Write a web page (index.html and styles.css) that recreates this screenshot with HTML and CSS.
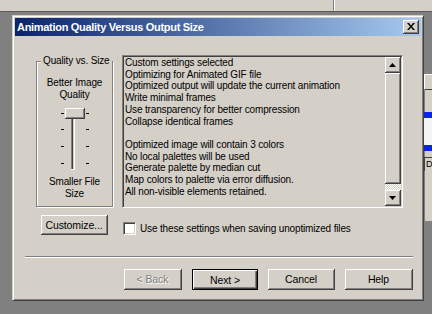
FILE: index.html
```html
<!DOCTYPE html>
<html>
  <head>
    <title>Animation Quality Versus Output Size</title>
    <link rel="stylesheet" href="styles.css">
  </head>
  <body>
    <div class="screen">
      <div class="topbar"><div class="topbar-split"></div></div>
      <div class="desk">
        <div class="dialog">
          <div class="titlebar">
            <span class="title">Animation Quality Versus Output Size</span>
            <span class="close">
              <svg width="8" height="7" viewBox="0 0 8 7"><path d="M0 0h2l2 2.5L6 0h2L5 3.5 8 7H6L4 4.5 2 7H0l3-3.5z" fill="#000"/></svg>
            </span>
          </div>

          <div class="row-top">
            <fieldset class="quality">
              <legend>Quality vs. Size</legend>
              <div class="caption">Better Image<br>Quality</div>
              <svg class="slider" width="32" height="68" viewBox="0 0 32 68">
                <!-- ticks -->
                <rect x="2" y="8" width="3" height="1" fill="#000"/>
                <rect x="2" y="24" width="3" height="1" fill="#000"/>
                <rect x="2" y="41" width="3" height="1" fill="#000"/>
                <rect x="2" y="58" width="3" height="1" fill="#000"/>
                <rect x="27" y="8" width="3" height="1" fill="#000"/>
                <rect x="27" y="24" width="3" height="1" fill="#000"/>
                <rect x="27" y="41" width="3" height="1" fill="#000"/>
                <rect x="27" y="58" width="3" height="1" fill="#000"/>
                <!-- track -->
                <rect x="12" y="6" width="4" height="59" fill="#fff"/>
                <rect x="12" y="6" width="3" height="58" fill="#808080"/>
                <rect x="13" y="7" width="2" height="57" fill="#404040"/>
                <rect x="14" y="7" width="1" height="57" fill="#d4d0c8"/>
                <!-- thumb -->
                <rect x="6" y="3" width="20" height="11" fill="#404040"/>
                <rect x="6" y="3" width="19" height="10" fill="#fff"/>
                <rect x="7" y="4" width="18" height="9" fill="#808080"/>
                <rect x="7" y="4" width="17" height="8" fill="#d4d0c8"/>
              </svg>
              <div class="caption">Smaller File<br>Size</div>
            </fieldset>

            <div class="listbox">
              <div class="list-text">
                Custom settings selected<br>
                Optimizing for Animated GIF file<br>
                Optimized output will update the current animation<br>
                Write minimal frames<br>
                Use transparency for better compression<br>
                Collapse identical frames<br>
                <br>
                Optimized image will contain 3 colors<br>
                No local palettes will be used<br>
                Generate palette by median cut<br>
                Map colors to palette via error diffusion.<br>
                All non-visible elements retained.
              </div>
              <div class="scrollbar">
                <div class="sb-btn">
                  <svg width="7" height="4" viewBox="0 0 7 4"><path d="M3.5 0L7 4H0z" fill="#000"/></svg>
                </div>
                <div class="sb-thumb"></div>
                <div class="sb-track"></div>
                <div class="sb-btn">
                  <svg width="7" height="4" viewBox="0 0 7 4"><path d="M0 0h7L3.5 4z" fill="#000"/></svg>
                </div>
              </div>
            </div>
          </div>

          <div class="row-mid">
            <button class="btn customize">Customize...</button>
            <span class="checkbox"></span>
            <span class="check-label">Use these settings when saving unoptimized files</span>
          </div>

          <div class="separator"></div>

          <div class="row-buttons">
            <button class="btn btn-back" disabled>&lt; Back</button>
            <button class="btn btn-next">Next &gt;</button>
            <button class="btn btn-cancel">Cancel</button>
            <button class="btn btn-help">Help</button>
          </div>
        </div>

        <div class="side">
          <div class="side-dark"></div>
          <div class="side-box"></div>
          <div class="side-face"></div>
          <div class="side-blue"></div>
          <div class="side-white"></div>
          <div class="side-blue"></div>
          <div class="side-face short"></div>
          <div class="side-d"><span class="side-letter">D</span></div>
          <div class="side-face tall"></div>
          <div class="side-rest"></div>
        </div>
      </div>
    </div>
  </body>
</html>
```

FILE: styles.css
```css
* {
  box-sizing: border-box;
}
body {
  margin: 0;
  background-color: #808080;
  font-family: "Liberation Sans", Arial, sans-serif;
  font-size: 10px;
  letter-spacing: -0.15px;
  color: #000;
}
.screen {
  width: 432px;
  height: 314px;
  overflow: hidden;
}

/* strip of the window behind */
.topbar {
  height: 12px;
  background-color: #d4d0c8;
  border-bottom: 1px solid #5a5a5a;
}
.topbar-split {
  margin-left: 333px;
  width: 2px;
  height: 11px;
  border-left: 1px solid #808080;
  border-right: 1px solid #fff;
}
.desk {
  display: flex;
  padding-top: 3px;
  padding-left: 12px;
}

/* dialog window */
.dialog {
  width: 412px;
  height: 286px;
  padding: 2px;
  background-color: #d4d0c8;
  border: 1px solid;
  border-color: #d4d0c8 #404040 #404040 #d4d0c8;
  box-shadow: inset 1px 1px 0 #fff, inset -1px -1px 0 #808080;
}
.titlebar {
  height: 18px;
  display: flex;
  align-items: center;
  justify-content: space-between;
  padding: 0 2px;
  background: linear-gradient(to right, #0a246a, #a6caf0);
}
.title {
  color: #fff;
  font-weight: bold;
  font-size: 11px;
  letter-spacing: -0.3px;
}
.close {
  width: 16px;
  height: 14px;
  display: flex;
  align-items: center;
  justify-content: center;
  background-color: #d4d0c8;
  border-right: 1px solid #404040;
  border-bottom: 1px solid #404040;
  box-shadow: inset 1px 1px 0 #fff, inset -1px -1px 0 #808080;
}

.row-top {
  display: flex;
  margin-top: 19px;
  padding-left: 21px;
}
.quality {
  width: 77px;
  height: 152px;
  min-width: 0;
  margin: 0;
  padding: 0;
  border: 1px solid #808080;
  box-shadow: 1px 1px 0 #fff, inset 1px 1px 0 #fff;
  display: flex;
  flex-direction: column;
  align-items: center;
}
.quality legend {
  margin-left: 4px;
  padding: 0 2px;
  background-color: #d4d0c8;
  line-height: 12px;
  white-space: nowrap;
}
.caption {
  text-align: center;
  line-height: 12px;
  white-space: nowrap;
}
.quality .caption:first-of-type {
  margin-top: 10px;
}
.slider {
  display: block;
  margin-top: 4px;
  margin-left: 1px;
}
.slider + .caption {
  margin-top: 3px;
}

.listbox {
  width: 281px;
  height: 153px;
  margin-left: 9px;
  display: flex;
  border: 1px solid;
  border-color: #808080 #fff #fff #808080;
  box-shadow: inset 1px 1px 0 #404040, inset -1px -1px 0 #d4d0c8;
  padding: 1px;
}
.list-text {
  flex: 1;
  padding: 0 0 0 1px;
  line-height: 11.7px;
  white-space: nowrap;
  overflow: hidden;
}
.scrollbar {
  width: 16px;
  display: flex;
  flex-direction: column;
}
.sb-btn,
.sb-thumb {
  background-color: #d4d0c8;
  border-right: 1px solid #404040;
  border-bottom: 1px solid #404040;
  box-shadow: inset 1px 1px 0 #fff, inset -1px -1px 0 #808080;
}
.sb-btn {
  height: 16px;
  display: flex;
  align-items: center;
  justify-content: center;
}
.sb-thumb {
  height: 111px;
}
.sb-track {
  flex: 1;
  background-color: #ebe9e4;
  background-image: repeating-conic-gradient(#fff 0 25%, #d4d0c8 0 50%);
  background-size: 2px 2px;
}

.row-mid {
  display: flex;
  align-items: center;
  margin-top: 7px;
  padding-left: 26px;
}
.btn {
  height: 21px;
  padding: 0;
  font-family: "Liberation Sans", Arial, sans-serif;
  font-size: 10.5px;
  letter-spacing: -0.1px;
  color: #000;
  background-color: #d4d0c8;
  border: none;
  border-right: 1px solid #404040;
  border-bottom: 1px solid #404040;
  box-shadow: inset 1px 1px 0 #fff, inset -1px -1px 0 #808080;
}
.customize {
  width: 67px;
  height: 20px;
}
.checkbox {
  width: 13px;
  height: 13px;
  margin-left: 15px;
  margin-top: 6px;
  background-color: #fff;
  border: 1px solid;
  border-color: #808080 #fff #fff #808080;
  box-shadow: inset 1px 1px 0 #404040, inset -1px -1px 0 #d4d0c8;
}
.check-label {
  margin-left: 4px;
  margin-top: 6px;
}

.separator {
  height: 2px;
  margin: 21px 8px 0 10px;
  border-top: 1px solid #808080;
  border-bottom: 1px solid #fff;
}

.row-buttons {
  display: flex;
  justify-content: flex-end;
  gap: 10px;
  margin-top: 11px;
  padding-right: 8px;
}
.btn-back {
  width: 58px;
  color: #808080;
  text-shadow: 1px 1px 0 #fff;
}
.btn-next {
  width: 66px;
  border: 1px solid #000;
  box-shadow: inset 1px 1px 0 #fff, inset -1px -1px 0 #404040, inset -2px -2px 0 #808080;
}
.btn-cancel {
  width: 67px;
}
.btn-help {
  width: 68px;
}

/* edge of the window behind, on the right */
.side {
  width: 8px;
  height: 301px;
  display: flex;
  flex-direction: column;
}
.side-dark {
  height: 59px;
  background-color: #808080;
}
.side-box {
  height: 16px;
  background-color: #d4d0c8;
  border-top: 1px solid #fff;
  border-left: 1px solid #fff;
  border-bottom: 1px solid #404040;
}
.side-face {
  height: 22px;
  background-color: #d4d0c8;
  border-left: 1px solid #808080;
}
.side-face.short {
  height: 6px;
}
.side-face.tall {
  height: 50px;
}
.side-blue {
  height: 6px;
  background-color: #0a24e0;
}
.side-white {
  height: 27px;
  background-color: #f4f4f4;
}
.side-d {
  height: 14px;
  padding-left: 1px;
  line-height: 12px;
  font-size: 9px;
  background-color: #d4d0c8;
  border-left: 1px solid #404040;
  border-top: 1px solid #404040;
}
.side-rest {
  flex: 1;
  background-color: #808080;
}
```
